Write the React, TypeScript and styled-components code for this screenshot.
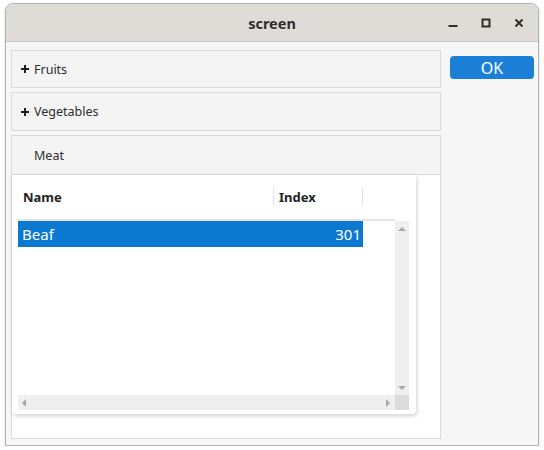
import React from "react";
import styled, { createGlobalStyle } from "styled-components";

const GlobalStyle = createGlobalStyle`
  html, body {
    margin: 0;
    padding: 0;
    background: #ffffff;
  }
  body {
    font-family: "Noto Sans", "Open Sans", sans-serif;
    color: #2e2e2e;
  }
`;

const Window = styled.div`
  margin: 3px 0 0 5px;
  width: 534px;
  height: 443px;
  box-sizing: border-box;
  border: 1px solid #b4b4b4;
  border-radius: 8px 8px 0 0;
  background: #f6f6f6;
  display: flex;
  flex-direction: column;
  overflow: hidden;
  box-shadow: 0 1px 2px rgba(0, 0, 0, 0.25);
`;

const TitleBar = styled.div`
  height: 37px;
  flex: none;
  background: #dfdcd8;
  border-bottom: 1px solid #cdc9c4;
  display: grid;
  grid-template-columns: 1fr auto 1fr;
  align-items: center;
`;

const Title = styled.div`
  grid-column: 2;
  font-weight: 700;
  font-size: 14.5px;
  color: #2e2e2e;
`;

const Controls = styled.div`
  grid-column: 3;
  justify-self: end;
  display: flex;
  align-items: center;
  gap: 15px;
  padding-right: 10px;
`;

const ControlButton = styled.div`
  width: 18px;
  height: 18px;
  display: flex;
  align-items: center;
  justify-content: center;
`;

const Body = styled.div`
  flex: 1;
  display: flex;
  align-items: flex-start;
  padding: 8px 4px 0 5px;
  gap: 9px;
`;

const Accordion = styled.div`
  width: 430px;
  display: flex;
  flex-direction: column;
  gap: 4px;
`;

const Pane = styled.div`
  box-sizing: border-box;
  border: 1px solid #dadada;
  background: #f4f4f4;
`;

const PaneHeader = styled.div<{ $h: number; $open?: boolean }>`
  height: ${(p) => p.$h}px;
  display: flex;
  align-items: center;
  padding-left: ${(p) => (p.$open ? 22 : 9)}px;
  font-size: 12.5px;
  color: #2e2e2e;
  gap: 5px;
  border-bottom: ${(p) => (p.$open ? "1px solid #d8d8d8" : "none")};
`;

const Plus = styled.svg`
  width: 8px;
  height: 8px;
  flex: none;
`;

const PaneContent = styled.div`
  background: #ffffff;
  height: 263px;
`;

const Card = styled.div`
  width: 404px;
  height: 239px;
  box-sizing: border-box;
  background: #ffffff;
  border-radius: 0 0 4px 4px;
  box-shadow: 1px 2px 4px rgba(0, 0, 0, 0.18);
  padding: 1px 7px 4px 6px;
  display: flex;
  flex-direction: column;
`;

const HeaderRow = styled.div`
  height: 43px;
  display: grid;
  grid-template-columns: 256px 89px 1fr;
  align-items: center;
  padding-bottom: 2px;
  box-sizing: border-box;
`;

const HeaderCell = styled.div<{ $sep?: boolean }>`
  height: 18px;
  display: flex;
  align-items: center;
  padding-left: 5px;
  font-weight: 700;
  font-size: 13px;
  color: #222;
  border-right: ${(p) => (p.$sep ? "1px solid #e2e2e2" : "none")};
`;

const TableArea = styled.div`
  flex: 1;
  display: grid;
  grid-template-columns: 377px 14px;
  grid-template-rows: 1fr 15px;
`;

const Rows = styled.div`
  border-top: 2px solid #e4e4e4;
  background: #ffffff;
`;

const Row = styled.div<{ $selected?: boolean }>`
  width: 345px;
  height: 26px;
  display: flex;
  align-items: center;
  justify-content: space-between;
  padding: 0 2px 0 4px;
  box-sizing: border-box;
  background: ${(p) => (p.$selected ? "#0b79d0" : "transparent")};
  color: ${(p) => (p.$selected ? "#ffffff" : "#222")};
  font-size: 15px;
`;

const VScroll = styled.div`
  background: #efefef;
  margin-top: 2px;
  display: flex;
  flex-direction: column;
  justify-content: space-between;
  align-items: center;
  padding: 6px 0 5px;
`;

const HScroll = styled.div`
  background: #efefef;
  display: flex;
  justify-content: space-between;
  align-items: center;
  padding: 0 5px 0 4px;
`;

const Corner = styled.div`
  background: #dcdcdc;
`;

const Arrow = styled.div<{ $dir: "up" | "down" | "left" | "right" }>`
  width: 0;
  height: 0;
  border: 4px solid transparent;
  ${(p) =>
    p.$dir === "up"
      ? "border-bottom-color: #a8a8a8; border-top-width: 0;"
      : p.$dir === "down"
      ? "border-top-color: #a8a8a8; border-bottom-width: 0;"
      : p.$dir === "left"
      ? "border-right-color: #a8a8a8; border-left-width: 0;"
      : "border-left-color: #a8a8a8; border-right-width: 0;"}
`;

const OkButton = styled.button`
  margin-top: 6px;
  width: 84px;
  height: 23px;
  border: none;
  border-radius: 4px;
  background: #1b7fd8;
  color: #ffffff;
  font-family: "Noto Sans", "Open Sans", sans-serif;
  font-size: 16px;
  padding: 0;
  display: flex;
  align-items: center;
  justify-content: center;
`;

const rows = [{ name: "Beaf", index: 301 }];

const PlusIcon = () => (
  <Plus viewBox="0 0 8 8">
    <path d="M4 0 V8 M0 4 H8" stroke="#1e1e1e" strokeWidth="2" />
  </Plus>
);

export default function App() {
  return (
    <>
      <GlobalStyle />
      <Window>
        <TitleBar>
          <Title>screen</Title>
          <Controls>
            <ControlButton>
              <svg width="10" height="10" viewBox="0 0 10 10">
                <rect x="0.5" y="7" width="9" height="2" fill="#2e2e2e" />
              </svg>
            </ControlButton>
            <ControlButton>
              <svg width="10" height="10" viewBox="0 0 10 10">
                <rect x="1.5" y="1.5" width="7" height="7" fill="none" stroke="#2e2e2e" strokeWidth="2" />
              </svg>
            </ControlButton>
            <ControlButton>
              <svg width="10" height="10" viewBox="0 0 10 10">
                <path d="M1.5 1.5 L8.5 8.5 M8.5 1.5 L1.5 8.5" stroke="#2e2e2e" strokeWidth="2" />
              </svg>
            </ControlButton>
          </Controls>
        </TitleBar>
        <Body>
          <Accordion>
            <Pane>
              <PaneHeader $h={36}>
                <PlusIcon />
                Fruits
              </PaneHeader>
            </Pane>
            <Pane>
              <PaneHeader $h={37}>
                <PlusIcon />
                Vegetables
              </PaneHeader>
            </Pane>
            <Pane>
              <PaneHeader $h={38} $open>
                Meat
              </PaneHeader>
              <PaneContent>
                <Card>
                  <HeaderRow>
                    <HeaderCell $sep>Name</HeaderCell>
                    <HeaderCell $sep>Index</HeaderCell>
                    <div />
                  </HeaderRow>
                  <TableArea>
                    <Rows>
                      {rows.map((r, i) => (
                        <Row key={i} $selected={i === 0}>
                          <span>{r.name}</span>
                          <span>{r.index}</span>
                        </Row>
                      ))}
                    </Rows>
                    <VScroll>
                      <Arrow $dir="up" />
                      <Arrow $dir="down" />
                    </VScroll>
                    <HScroll>
                      <Arrow $dir="left" />
                      <Arrow $dir="right" />
                    </HScroll>
                    <Corner />
                  </TableArea>
                </Card>
              </PaneContent>
            </Pane>
          </Accordion>
          <OkButton>OK</OkButton>
        </Body>
      </Window>
    </>
  );
}
